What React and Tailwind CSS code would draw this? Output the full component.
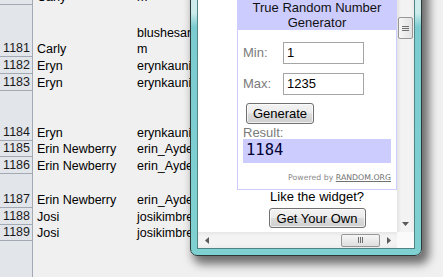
import React from "react";

const rows = [
  { n: "1180", h: "h-[17px] -mt-[12px]", a: "Carly", b: ["m"] },
  { n: "1181", h: "h-[52px]", a: "Carly", b: ["blushesarahlee@hotmail.co", "m"] },
  { n: "1182", h: "h-[17px]", a: "Eryn", b: ["erynkaunisto@yahoo.com"] },
  { n: "1183", h: "h-[17px]", a: "Eryn", b: ["erynkaunisto@yahoo.com"] },
  { n: "1184", h: "h-[50px]", a: "Eryn", b: ["erynkaunisto@yahoo.com"] },
  { n: "1185", h: "h-[16px]", a: "Erin Newberry", b: ["erin_Ayden@hotmail.com"] },
  { n: "1186", h: "h-[17px]", a: "Erin Newberry", b: ["erin_Ayden@hotmail.com"] },
  { n: "1187", h: "h-[34px]", a: "Erin Newberry", b: ["erin_Ayden@hotmail.com"] },
  { n: "1188", h: "h-[17px]", a: "Josi", b: ["josikimbrell@gmail.com"] },
  { n: "1189", h: "h-[16px]", a: "Josi", b: ["josikimbrell@gmail.com"] },
];

function VistaButton({ className, children }) {
  return (
    <div
      className={
        "flex items-center justify-center rounded-[3px] border border-[#707070] bg-[linear-gradient(180deg,#f3f3f3_0%,#ebebeb_48%,#dcdcdc_52%,#cfcfcf_100%)] text-[13px] leading-none text-black shadow-[inset_0_0_0_1px_rgba(255,255,255,0.7)] " +
        className
      }
    >
      {children}
    </div>
  );
}

function Tri({ dir }) {
  const pts = {
    down: "0,0 7,0 3.5,4",
    left: "4,0 4,7 0,3.5",
    right: "0,0 0,7 4,3.5",
  }[dir];
  const w = dir === "down" ? 7 : 4;
  const h = dir === "down" ? 4 : 7;
  return (
    <svg width={w} height={h} viewBox={`0 0 ${w} ${h}`}>
      <polygon points={pts} fill="#5a5a5a" />
    </svg>
  );
}

export default function App() {
  return (
    <div className="relative h-[277px] w-[443px] overflow-hidden bg-[#f0f0f0] font-['Liberation_Sans',Arial,sans-serif] text-[12.5px] text-black">
      {/* Spreadsheet */}
      <div className="flex h-full flex-col">
        {rows.map((r) => (
          <div key={r.n} className={"flex shrink-0 " + r.h}>
            <div className="flex w-[33px] shrink-0 items-end justify-end border-b border-r border-[#a3aab4] bg-[#e2e5ea] pr-[2px] leading-[16px] text-[#1a1a1a]">
              {r.n}
            </div>
            <div className="flex w-[100px] shrink-0 items-end whitespace-nowrap pl-[4px] leading-[16px]">
              {r.a}
            </div>
            <div className="flex flex-col justify-end whitespace-nowrap pl-[4px] leading-[16px]">
              {r.b.map((t, i) => (
                <div key={i}>{t}</div>
              ))}
            </div>
          </div>
        ))}
        <div className="flex flex-1">
          <div className="w-[33px] shrink-0 border-r border-[#a3aab4] bg-[#e2e5ea]" />
        </div>
      </div>

      {/* Popup window */}
      <div className="absolute left-[190px] top-[-40px] h-[296px] w-[232px] rounded-b-[7px] border border-[#2c3a3a] bg-[linear-gradient(180deg,#d4eeee_0px,#cdebeb_52px,#7accd0_66px,#7fd1d1_100%)] px-[6px] pb-[6px] pt-[8px] shadow-[5px_6px_10px_2px_rgba(0,0,0,0.55)]">
        <div className="flex h-full flex-col border border-[#4f8484] bg-white">
          <div className="flex min-h-0 flex-1">
            {/* Content */}
            <div className="flex-1 overflow-hidden">
              <div className="ml-[39px] flex w-[160px] flex-col items-center">
                <div className="w-full border-x border-b border-[#ccccff]">
                  <div className="flex h-[60px] flex-col items-center justify-end bg-[#ccccff] text-[13px] leading-[15px] text-[#111]">
                    <div>True Random Number</div>
                    <div>Generator</div>
                  </div>
                  <div className="flex flex-col px-[5px] text-[13px]">
                    <div className="mt-[12px] flex items-center">
                      <div className="w-[40px] text-[#7b7b7b]">Min:</div>
                      <div className="flex h-[22px] w-[81px] items-center border border-[#a5a5a5] pl-[3px]">1</div>
                    </div>
                    <div className="mt-[9px] flex items-center">
                      <div className="w-[40px] text-[#7b7b7b]">Max:</div>
                      <div className="flex h-[22px] w-[81px] items-center border border-[#a5a5a5] pl-[3px]">1235</div>
                    </div>
                    <VistaButton className="ml-[3px] mt-[8px] h-[21px] w-[68px]">Generate</VistaButton>
                    <div className="mt-[2px] leading-[13px] text-[#7b7b7b]">Result:</div>
                    <div className="flex h-[24px] w-full items-center bg-[#ccccff] pl-[3px] font-['DejaVu_Sans_Mono',monospace] text-[15.5px] text-[#000033]">
                      1184
                    </div>
                    <div className="mt-[10px] pb-[6px] text-right font-['DejaVu_Sans',sans-serif] text-[7.8px] leading-[10px] text-[#8a8a8a]">
                      Powered by <span className="text-[#707070] underline">RANDOM.ORG</span>
                    </div>
                  </div>
                </div>
                <div className="text-[13px] leading-[14px]">Like the widget?</div>
                <VistaButton className="mt-[4px] h-[20px] w-[97px]">Get Your Own</VistaButton>
              </div>
            </div>
            {/* Vertical scrollbar */}
            <div className="flex w-[17px] shrink-0 flex-col items-center bg-[linear-gradient(90deg,#e3e3e3_0%,#f3f3f3_25%,#f3f3f3_75%,#ececec_100%)]">
              <div className="mt-[47px] flex h-[22px] w-[15px] flex-col items-center justify-center gap-[1px] rounded-[2px] border border-[#979797] bg-[linear-gradient(90deg,#f6f6f6,#e2e2e2)]">
                <div className="h-[1px] w-[7px] bg-[#6f6f6f]" />
                <div className="h-[1px] w-[7px] bg-[#6f6f6f]" />
                <div className="h-[1px] w-[7px] bg-[#6f6f6f]" />
              </div>
              <div className="flex-1" />
              <div className="flex h-[17px] items-center justify-center">
                <Tri dir="down" />
              </div>
            </div>
          </div>
          {/* Horizontal scrollbar */}
          <div className="flex h-[16px] shrink-0">
            <div className="flex flex-1 items-center bg-[linear-gradient(180deg,#e6e6e6_0%,#f3f3f3_25%,#f3f3f3_75%,#ececec_100%)]">
              <div className="flex h-full w-[17px] items-center justify-center">
                <Tri dir="left" />
              </div>
              <div className="flex flex-1 items-center">
                <div className="ml-[126px] flex h-[13px] w-[39px] items-center justify-center gap-[1px] rounded-[2px] border border-[#979797] bg-[linear-gradient(180deg,#f6f6f6,#dedede)]">
                  <div className="h-[6px] w-[1px] bg-[#6f6f6f]" />
                  <div className="h-[6px] w-[1px] bg-[#6f6f6f]" />
                  <div className="h-[6px] w-[1px] bg-[#6f6f6f]" />
                </div>
              </div>
              <div className="flex h-full w-[17px] items-center justify-center">
                <Tri dir="right" />
              </div>
            </div>
            <div className="w-[17px] shrink-0 bg-[#fafafa]" />
          </div>
        </div>
      </div>
    </div>
  );
}
